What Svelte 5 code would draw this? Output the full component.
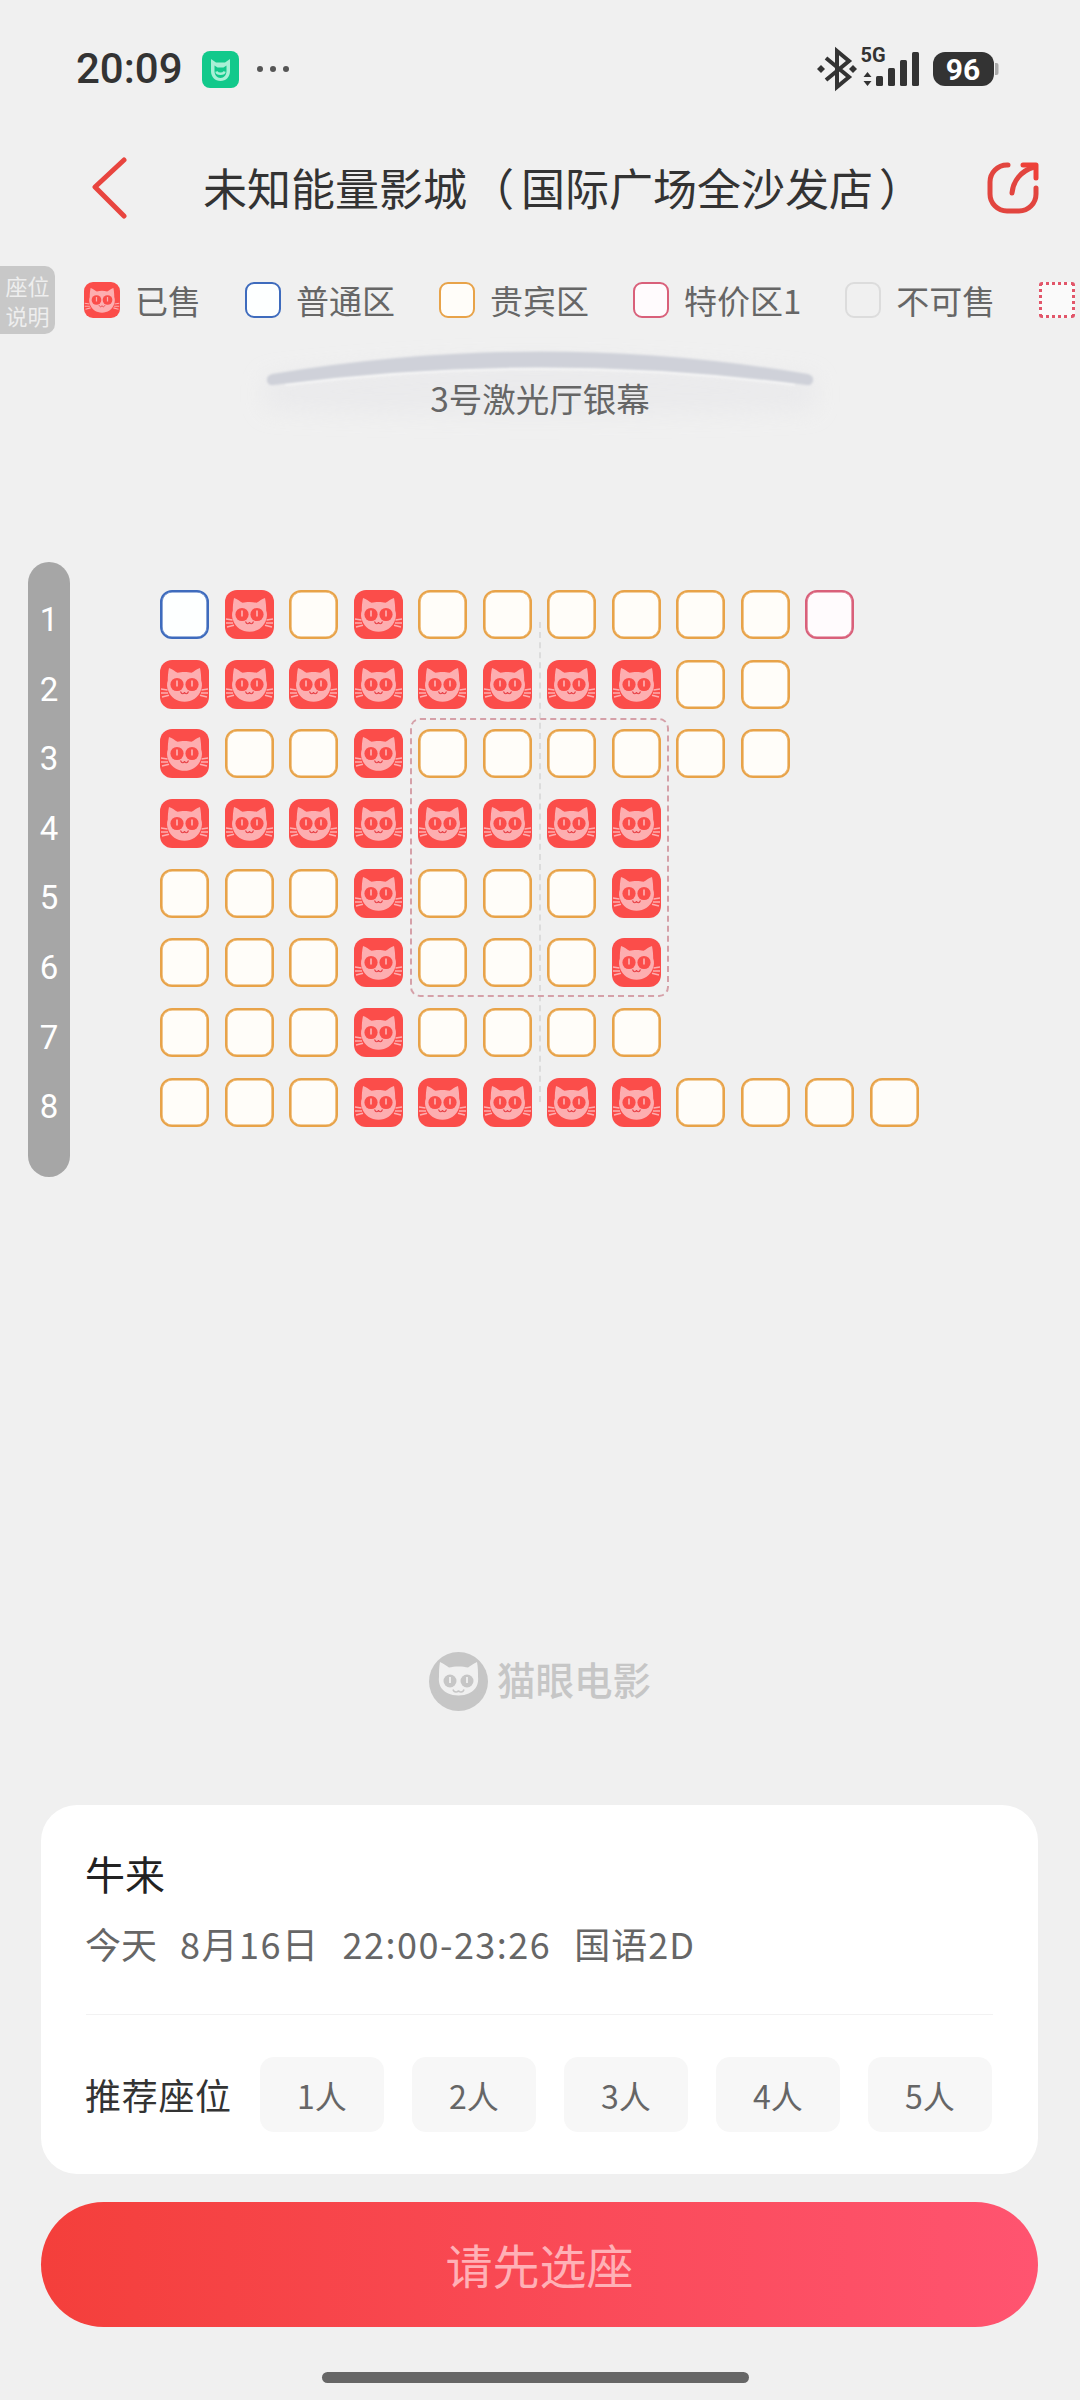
<script>
  const rows = ['bsosoooooop','ssssssssoo','soosoooooo','ssssssss','ooosooos','ooosooos','ooosoooo','ooosssssoooo'];
  const legend = [
    { k: 's', t: '已售' }, { k: 'b', t: '普通区' }, { k: 'o', t: '贵宾区' },
    { k: 'p', t: '特价区1' }, { k: 'g', t: '不可售' }, { k: 'd', t: '' }
  ];
  const counts = ['1人','2人','3人','4人','5人'];
</script>

{#snippet cat()}
  <svg class="cat" viewBox="0 0 49 49" aria-hidden="true">
    <path class="head" d="M9 8C12.500 9 15 11.500 17.500 12.800C21.500 11.600 27.500 11.600 31.500 12.800C34 11.500 36.500 9 40 8C41 13 41.200 17 41.200 20.500C42.500 24 42 27.500 41 30C38.500 37.500 32 41.800 24.500 41.800C17 41.800 10.500 37.500 8 30C7 27.500 6.500 24 7.800 20.500C7.800 17 8 13 9 8Z"/>
    <circle class="eye" cx="17" cy="24.500" r="6.600"/>
    <circle class="eye" cx="32" cy="24.500" r="6.600"/>
    <path class="slit" d="M17 20.500V26.500M32 20.500V26.500"/>
    <path class="mouth" d="M20.500 31.500C21.500 34.500 24 34.200 24.500 32.200C25 34.200 27.500 34.500 28.500 31.500"/>
    <path class="whisker" d="M1 29L7.500 30M1 33L8 33M2 37L9 35.200M48 29L41.500 30M48 33L41 33M47 37L40 35.200"/>
  </svg>
{/snippet}

<div class="page">
  <header class="status">
    <span class="time">20:09</span>
    <svg class="mi" viewBox="0 0 37 37" aria-hidden="true">
      <rect width="37" height="37" rx="8" fill="#12c98b"/>
      <path d="M9 8L14 11.500H23L28 8V20C28 26 24 30 18.500 30C13 30 9 26 9 20Z" fill="#a9f0d6"/>
      <path d="M12.500 14.500L15.500 16.500H21.500L24.500 14.500V20C24.500 24 22 27 18.500 27C15 27 12.500 24 12.500 20Z" fill="#12c98b"/>
      <path d="M14.500 20.500C15 23.500 22 23.500 22.500 20.500" stroke="#a9f0d6" stroke-width="2.500" fill="none"/>
    </svg>
    <span class="dots"><i></i><i></i><i></i></span>
    <svg class="sysicons" viewBox="815 40 185 58" aria-hidden="true">
      <path d="M826 58L849 77L837 87V51L849 61L826 80" fill="none" stroke="#333" stroke-width="4"/>
      <path d="M821 65l4 4-4 4-4-4zM853 65l4 4-4 4-4-4z" fill="#333"/>
      <text x="860.500" y="62" class="fiveg">5G</text>
      <path d="M867.500 72l4 5h-8zM867.500 86l-4-5h8z" fill="#333"/>
      <rect x="876" y="76" width="7" height="10" rx="1.500" fill="#333"/>
      <rect x="888" y="68" width="7" height="18" rx="1.500" fill="#333"/>
      <rect x="900" y="60" width="7" height="26" rx="1.500" fill="#333"/>
      <rect x="912" y="52" width="7" height="34" rx="1.500" fill="#333"/>
      <rect x="933" y="52" width="61" height="34" rx="12" fill="#333"/>
      <path d="M995 63h1.500a2 2 0 0 1 2 2v8a2 2 0 0 1-2 2H995z" fill="#aaa"/>
      <text x="963" y="80" class="batt">96</text>
    </svg>
  </header>

  <nav class="nav">
    <svg class="back" viewBox="0 0 38 62" aria-hidden="true">
      <path d="M34 3L5 30L34 59" fill="none" stroke="#e8453f" stroke-width="5" stroke-linecap="round" stroke-linejoin="round"/>
    </svg>
    <h1>未知能量影城<span class="paren">（</span>国际广场全沙发店<span class="paren2">）</span></h1>
    <svg class="share" viewBox="0 0 53 54" aria-hidden="true">
      <path d="M21 4H20A17 17 0 0 0 3 21V33A17 17 0 0 0 20 50H32A17 17 0 0 0 49 33V27" fill="none" stroke="#e2453f" stroke-width="5" stroke-linecap="round"/>
      <path d="M25 32C26 20 34 10 47 6" fill="none" stroke="#e2453f" stroke-width="5" stroke-linecap="round"/>
      <path d="M36 4H49V17" fill="none" stroke="#ee4038" stroke-width="5" stroke-linecap="round" stroke-linejoin="round"/>
    </svg>
  </nav>

  <section class="legendbar">
    <div class="badge">座位<br/>说明</div>
    <ul class="legend">
      {#each legend as l}
        <li>
          <span class="lg lg-{l.k}">{#if l.k === 's'}{@render cat()}{/if}</span>
          {#if l.t}<span>{l.t}</span>{/if}
        </li>
      {/each}
    </ul>
  </section>

  <section class="screen">
    <svg class="arc" viewBox="230 330 620 110" aria-hidden="true">
      <defs>
        <filter id="b1" x="-20%" y="-60%" width="140%" height="220%"><feGaussianBlur stdDeviation="11"/></filter>
        <filter id="b2" x="-5%" y="-50%" width="110%" height="200%"><feGaussianBlur stdDeviation="1"/></filter>
        <filter id="b3" x="-5%" y="-50%" width="110%" height="200%"><feGaussianBlur stdDeviation="0.800"/></filter>
      </defs>
      <path d="M265 378Q540 345 815 378V410Q540 420 265 410Z" fill="#e6e6e9" opacity="0.55" filter="url(#b1)"/>
      <path d="M285 384Q540 352 795 384" fill="none" stroke="#f8f8f8" stroke-width="3" filter="url(#b2)"/>
      <path d="M272 374Q540 329 808 374Q814 376 813 381Q812 386 806 385Q540 350 274 385Q268 386 267 381Q266 376 272 374Z" fill="#cfd1d9" filter="url(#b3)"/>
    </svg>
    <p>3号激光厅银幕</p>
  </section>

  <section class="map">
    <div class="rowbar">
      {#each rows as _, i}<span>{i + 1}</span>{/each}
    </div>
    <div class="seats">
      {#each rows as r}
        <div class="seatrow">
          {#each r.split('') as s}
            <span class="seat seat-{s}">{#if s === 's'}{@render cat()}{/if}</span>
          {/each}
        </div>
      {/each}
    </div>
    <div class="centerline"></div>
    <div class="bestbox"></div>
  </section>

  <div class="brand">
    <svg class="brandcat" viewBox="0 0 59 59" aria-hidden="true">
      <circle cx="29.500" cy="29.500" r="29.500" fill="#c6c6c6"/>
      <path d="M11 10C14 11.500 18 14 20 15.500C25 14 34 14 39 15.500C41 14 45 11.500 48 10C49 15 49 20 49 25C50 33 46 43 29.500 43.500C13 43 9 33 10 25C10 20 10 15 11 10Z" fill="#f0f0f0"/>
      <circle cx="21" cy="29" r="6.500" fill="#c6c6c6"/><circle cx="38" cy="29" r="6.500" fill="#c6c6c6"/>
      <path d="M21 25V31M38 25V31" stroke="#f0f0f0" stroke-width="1.800"/>
      <path d="M24 37.500C25 41 29 40.500 29.500 38.500C30 40.500 34 41 35 37.500" stroke="#c6c6c6" stroke-width="1.500" fill="none"/>
      <path d="M2 36H9M3 40L10 39M5 44L11 42M57 36H50M56 40L49 39M54 44L48 42" stroke="#c6c6c6" stroke-width="1.800"/>
    </svg>
    <span>猫眼电影</span>
  </div>

  <section class="card">
    <h2>牛来</h2>
    <div class="meta"><span>今天</span><span class="wide">8月16日</span><span class="wide">22:00-23:26</span><span class="wide2">国语2D</span></div>
    <div class="divider"></div>
    <div class="recommend">
      <span class="reclabel">推荐座位</span>
      <div class="counts">
        {#each counts as c}<button>{c}</button>{/each}
      </div>
    </div>
  </section>

  <button class="cta">请先选座</button>
  <div class="home"></div>
</div>

<style>
  :global(body) { margin: 0; background: #f0f0f0; }
  .page {
    width: 1080px; height: 2400px; overflow: hidden; background: #f0f0f0;
    display: flex; flex-direction: column; color: #333;
    font-family: "Noto Sans CJK SC", "Noto Sans", sans-serif;
  }
  .status { height: 138px; display: flex; align-items: center; padding-left: 76px; flex: none; }
  .time { font-family: Roboto, sans-serif; font-weight: 500; font-size: 42px; line-height: 1; color: #333; width: 126px; }
  .mi { width: 37px; height: 37px; }
  .dots { display: flex; gap: 7px; margin-left: 18px; }
  .dots i { width: 6px; height: 6px; border-radius: 50%; background: #555; }
  .sysicons { width: 185px; height: 58px; margin-left: auto; margin-right: 80px; }
  .fiveg { font: 700 20px Roboto, sans-serif; fill: #333; }
  .batt { font: 700 30px Roboto, sans-serif; fill: #fff; text-anchor: middle; }

  .nav { height: 100px; display: flex; align-items: center; padding-left: 90px; flex: none; }
  .back { width: 38px; height: 62px; flex: none; }
  .nav h1 { margin: 0 0 3px 75px; font-size: 44px; font-weight: 400; color: #333; line-height: 60px; white-space: nowrap; width: 704px; }
  .paren { margin-left: 3px; margin-right: 7px; }
  .paren2 { margin-left: 6px; }
  .share { width: 53px; height: 54px; margin-left: 80px; flex: none; }

  .legendbar { margin-top: 28px; height: 68px; display: flex; align-items: center; flex: none; }
  .badge {
    width: 55px; height: 68px; background: #c8c8c8; border-radius: 0 10px 10px 0; color: #eee;
    font-size: 22px; line-height: 30px; text-align: center; padding-top: 4px; box-sizing: border-box; flex: none;
  }
  .legend { list-style: none; margin: 0 0 0 29px; padding: 0; display: flex; gap: 44px; white-space: nowrap; }
  .legend li { display: flex; align-items: center; gap: 15px; font-size: 33px; line-height: 36px; color: #666; }
  .lg { width: 36px; height: 36px; box-sizing: border-box; border-radius: 9px; border: 2px solid #999; display: block; flex: none; overflow: hidden; }
  .lg-s { border: 0; background: #fb4d4a; }
  .lg-b { border-color: #3e6bbd; background: #fdffff; }
  .lg-o { border-color: #e8a349; background: #fffdf9; }
  .lg-p { border-color: #d9607a; background: #fffbfd; }
  .lg-g { border-color: #dcdcdc; background: #f0f0f0; }
  .lg-d { border: 3px dotted #e2566a; border-radius: 3px; background: #fafafa; }

  .screen { position: relative; height: 110px; flex: none; box-sizing: border-box; padding-top: 44px; text-align: center; }
  .arc { position: absolute; left: 230px; top: -4px; width: 620px; height: 110px; }
  .screen p { position: relative; margin: 0; font-size: 33.500px; line-height: 40px; color: #666; }

  .map { position: relative; margin-top: 118px; height: 615px; padding-left: 28px; display: flex; flex: none; }
  .rowbar {
    width: 42px; height: 615px; border-radius: 21px; background: #a6a6a6; color: #fff; flex: none;
    box-sizing: border-box; padding-top: 23px; display: flex; flex-direction: column; align-items: center;
  }
  .rowbar span { height: 69.600px; font: 400 33px/69.600px Roboto, sans-serif; }
  .seats { margin: 28px 0 0 90px; display: flex; flex-direction: column; gap: 20.700px; position: relative; z-index: 1; }
  .seatrow { display: flex; gap: 15.500px; height: 49px; }
  .seat { width: 49px; height: 49px; box-sizing: border-box; border-radius: 12px; border: 2px solid #e8a349; box-shadow: inset 0 0 0 0.6px #e8a349; background: #fffdf9; display: block; flex: none; overflow: hidden; }
  .seat-s { border: 0; box-shadow: none; background: #fb4d4a; }
  .seat-b { border-color: #3e6bbd; box-shadow: inset 0 0 0 0.6px #3e6bbd; background: #fdffff; }
  .seat-p { border-color: #d9607a; box-shadow: inset 0 0 0 0.6px #d9607a; background: #fffbfd; }
  .cat { display: block; width: 100%; height: 100%; }
  .head { fill: #fdaeb0; }
  .eye { fill: #fb4d4a; }
  .slit { stroke: #fdaeb0; stroke-width: 1.700; fill: none; }
  .mouth { stroke: #e8444a; stroke-width: 1.100; fill: none; }
  .whisker { stroke: #fdaeb0; stroke-width: 1.500; fill: none; }

  .centerline { position: absolute; left: 539px; top: 60px; height: 480px; border-left: 2px dashed #dcdcdc; }
  .bestbox { position: absolute; left: 410px; top: 156px; width: 259px; height: 279px; box-sizing: border-box; border: 2px dashed #d5a0a8; border-radius: 10px; }

  .brand { margin-top: 475px; height: 59px; display: flex; align-items: center; padding-left: 429px; gap: 9px; flex: none; }
  .brandcat { width: 59px; height: 59px; }
  .brand span { font-size: 38.500px; font-weight: 500; color: #c6c6c6; line-height: 1; padding-bottom: 6px; }

  .card { margin: 94px 42px 0 41px; height: 369px; flex: none; box-sizing: border-box; background: #fff; border-radius: 36px; padding: 43px 44px 0; }
  .card h2 { margin: 0; font-size: 40px; line-height: 50px; font-weight: 400; color: #222; }
  .meta { margin-top: 23px; display: flex; gap: 23px; font-size: 36px; line-height: 44px; color: #666; white-space: nowrap; }
  .wide { letter-spacing: 1.500px; }
  .wide2 { letter-spacing: 1px; }
  .divider { margin: 49px 1px 0; height: 1px; background: #f2f2f2; }
  .recommend { margin-top: 42px; display: flex; align-items: center; gap: 31px; }
  .reclabel { font-size: 36px; letter-spacing: 0.700px; color: #333; white-space: nowrap; width: 144px; padding-bottom: 2px; }
  .counts { display: flex; gap: 28px; }
  .counts button {
    width: 124px; height: 75px; border: 0; padding: 0; background: #f7f7f7; border-radius: 14px;
    font: 400 32px "Noto Sans CJK SC", sans-serif; color: #666;
  }

  .cta {
    margin: 28px 42px 0 41px; height: 125px; flex: none; border: 0; padding: 0 0 3px; border-radius: 63px;
    background: linear-gradient(90deg, #f43f3b, #ff5470); color: #ffb0b6;
    font: 400 47px "Noto Sans CJK SC", sans-serif;
  }
  .home { margin: 45px 0 0 322px; width: 427px; height: 11px; border-radius: 6px; background: #666; flex: none; }
</style>
